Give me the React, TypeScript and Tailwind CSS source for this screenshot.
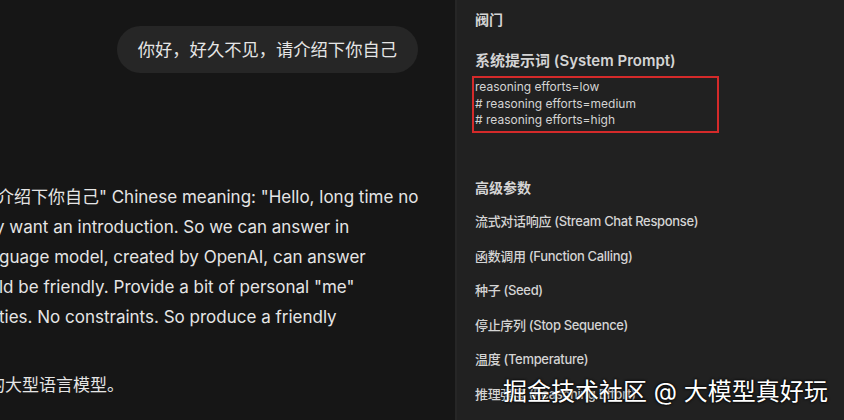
const FONT = { fontFamily: 'Inter, "Noto Sans CJK SC", sans-serif' };

const PARAMS = [
  "流式对话响应 (Stream Chat Response)",
  "函数调用 (Function Calling)",
  "种子 (Seed)",
  "停止序列 (Stop Sequence)",
  "温度 (Temperature)",
  "推理强度 (Reasoning Effort)",
];

export default function App() {
  return (
    <div className="relative flex h-[420px] w-[844px] overflow-hidden bg-[#161616]" style={FONT}>
      {/* chat column */}
      <main className="flex w-[455px] shrink-0 flex-col overflow-hidden bg-[#161616]">
        <div className="flex justify-end pr-[37px] pt-[26px]">
          <div className="flex h-[47px] items-center rounded-full bg-[#262626] px-[21px] text-[17.3px] text-neutral-200">
            你好，好久不见，请介绍下你自己
          </div>
        </div>

        <div className="mt-[109px] whitespace-nowrap text-[17px] leading-[30px] text-neutral-200">
          <div className="-ml-[3px]">介绍下你自己" Chinese meaning: "Hello, long time no</div>
          <div className="-ml-[5px]">y want an introduction. So we can answer in</div>
          <div className="-ml-[1px]">guage model, created by OpenAI, can answer</div>
          <div className="-ml-[1px]">ld be friendly. Provide a bit of personal "me"</div>
          <div className="-ml-[1px]">ties. No constraints. So produce a friendly</div>
          <div className="-ml-[12px] mt-[38px]">的大型语言模型。</div>
        </div>
      </main>

      {/* settings panel */}
      <aside className="flex flex-1 flex-col border-l-2 border-[#262626] bg-[#212121] pl-[18px] text-neutral-300">
        <div className="mt-[11px] text-[14px] font-semibold leading-[18px]">阀门</div>

        <div className="mt-[23px] text-[15px] font-semibold leading-[18px] text-neutral-300">
          系统提示词 (System Prompt)
        </div>
        <div className="-ml-[3px] mt-[6px] h-[57px] w-[247px] border-2 border-[#d42a2a] pl-[1px] pt-[1px] text-[12px] leading-[16.5px] text-neutral-300">
          <div>reasoning efforts=low</div>
          <div># reasoning efforts=medium</div>
          <div># reasoning efforts=high</div>
        </div>

        <div className="mt-[46px] text-[14px] font-semibold leading-[18px]">高级参数</div>
        <div className="mt-[16px] flex flex-col gap-[17px]">
          {PARAMS.map((p) => (
            <div key={p} className="text-[13px] font-medium leading-[17.5px] tracking-tight text-neutral-300">
              {p}
            </div>
          ))}
        </div>
      </aside>

      {/* video watermark */}
      <div
        className="absolute left-[503px] top-[376px] text-[24px] leading-[32px] text-white"
        style={{ textShadow: "0 0 3px #000, 0 0 2px #000" }}
      >
        掘金技术社区 @ 大模型真好玩
      </div>
    </div>
  );
}
